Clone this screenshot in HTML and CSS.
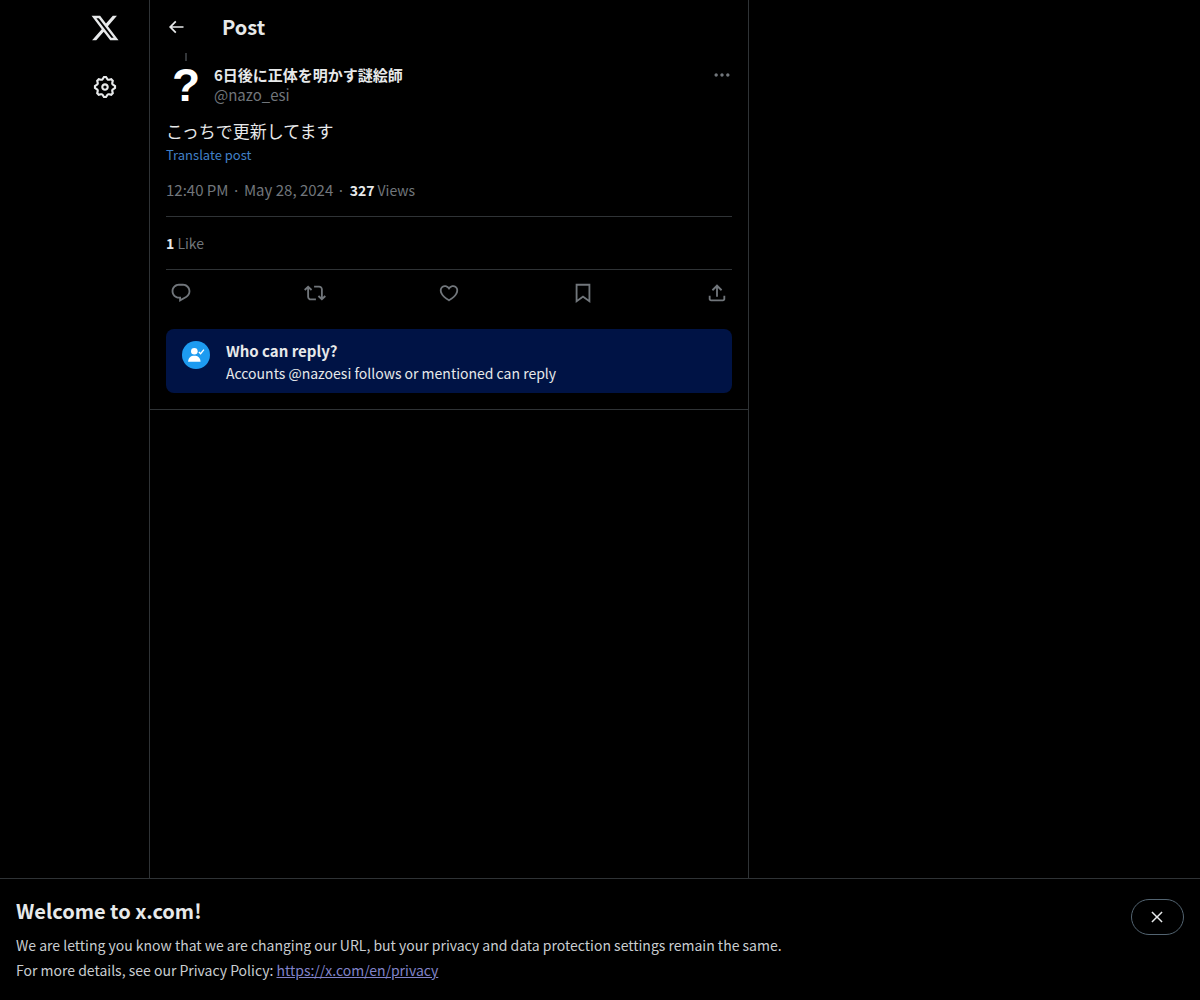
FILE: index.html
```html
<!DOCTYPE html>
<html lang="en">
<head>
<meta charset="utf-8">
<title>Post</title>
<link rel="stylesheet" href="styles.css">
</head>
<body>
<div class="page">
  <nav class="rail">
    <svg class="logo" viewBox="0 0 24 24"><path d="M18.244 2.25h3.308l-7.227 8.26 8.502 11.24H16.17l-5.214-6.817L4.99 21.75H1.68l7.73-8.835L1.254 2.25H8.08l4.713 6.231zm-1.161 17.52h1.833L7.084 4.126H5.117z"/></svg>
    <svg class="gear" viewBox="0 0 24 24"><path d="M10.54 1.75h2.92l1.57 2.36c.11.17.32.25.53.21l2.53-.59 2.17 2.17-.58 2.54c-.05.2.04.41.21.53l2.36 1.57v2.92l-2.36 1.57c-.17.12-.26.33-.21.53l.58 2.54-2.17 2.17-2.53-.59c-.21-.04-.42.04-.53.21l-1.57 2.36h-2.92l-1.58-2.36c-.11-.17-.32-.25-.52-.21l-2.54.59-2.17-2.17.58-2.54c.05-.2-.03-.41-.21-.53l-2.35-1.57v-2.92L4.1 8.97c.18-.12.26-.33.21-.53L3.73 5.9 5.9 3.73l2.54.59c.2.04.41-.04.52-.21l1.58-2.36zm1.07 2l-.98 1.47C10.05 6.08 9 6.5 7.99 6.27l-1.46-.34-.6.6.33 1.46c.24 1.01-.18 2.07-1.05 2.64l-1.46.98v.78l1.46.98c.87.57 1.29 1.63 1.05 2.64l-.33 1.46.6.6 1.46-.34c1.01-.23 2.06.19 2.64 1.05l.98 1.47h.78l.97-1.47c.58-.86 1.63-1.28 2.65-1.05l1.45.34.61-.6-.34-1.46c-.23-1.01.18-2.07 1.05-2.64l1.47-.98v-.78l-1.47-.98c-.87-.57-1.28-1.63-1.05-2.64l.34-1.46-.61-.6-1.45.34c-1.02.23-2.07-.19-2.65-1.05l-.97-1.47h-.78zM12 10.5c-.83 0-1.5.67-1.5 1.5s.67 1.5 1.5 1.5c.82 0 1.5-.67 1.5-1.5s-.68-1.5-1.5-1.5zM8.5 12c0-1.93 1.56-3.5 3.5-3.5 1.93 0 3.5 1.57 3.5 3.5s-1.57 3.5-3.5 3.5c-1.94 0-3.5-1.57-3.5-3.5z"/></svg>
  </nav>
  <main class="column">
    <header class="topbar">
      <svg class="back" viewBox="0 0 24 24"><path d="M7.414 13l5.043 5.04-1.414 1.42L3.586 12l7.457-7.46 1.414 1.42L7.414 11H21v2H7.414z"/></svg>
      <h1 class="title">Post</h1>
    </header>
    <article class="post">
      <div class="thread-line"></div>
      <div class="author">
        <div class="avatar">?</div>
        <div class="names">
          <div class="name">6日後に正体を明かす謎絵師</div>
          <div class="handle">@nazo_esi</div>
        </div>
        <svg class="more" viewBox="0 0 24 24"><path d="M3 12c0-1.1.9-2 2-2s2 .9 2 2-.9 2-2 2-2-.9-2-2zm9 2c1.1 0 2-.9 2-2s-.9-2-2-2-2 .9-2 2 .9 2 2 2zm7 0c1.1 0 2-.9 2-2s-.9-2-2-2-2 .9-2 2 .9 2 2 2z"/></svg>
      </div>
      <p class="text">こっちで更新してます</p>
      <a class="translate">Translate post</a>
      <div class="meta"><span>12:40 PM</span><span class="dot">·</span><span>May 28, 2024</span><span class="dot">·</span><span class="views"><b class="num">327</b> Views</span></div>
      <div class="likes"><b class="num">1</b> Like</div>
      <div class="actions">
        <svg class="act" viewBox="0 0 24 24"><path d="M1.751 10c0-4.42 3.584-8 8.005-8h4.366c4.49 0 8.129 3.64 8.129 8.13 0 2.96-1.607 5.68-4.196 7.11l-8.054 4.46v-3.69h-.067c-4.49.1-8.183-3.51-8.183-8.01zm8.005-6c-3.317 0-6.005 2.69-6.005 6 0 3.37 2.77 6.08 6.138 6.01l.351-.01h1.761v2.3l5.087-2.81c1.951-1.08 3.163-3.13 3.163-5.36 0-3.39-2.744-6.13-6.129-6.13H9.756z"/></svg>
        <svg class="act" viewBox="0 0 24 24"><path d="M4.5 3.88l4.432 4.14-1.364 1.46L5.5 7.55V16c0 1.1.896 2 2 2H13v2H7.5c-2.209 0-4-1.79-4-4V7.55L1.432 9.48.068 8.02 4.5 3.88zM16.5 6H11V4h5.5c2.209 0 4 1.79 4 4v8.45l2.068-1.93 1.364 1.46-4.432 4.14-4.432-4.14 1.364-1.46 2.068 1.93V8c0-1.1-.896-2-2-2z"/></svg>
        <svg class="act" viewBox="0 0 24 24"><path d="M16.697 5.5c-1.222-.06-2.679.51-3.89 2.16l-.805 1.09-.806-1.09C9.984 6.01 8.526 5.44 7.304 5.5c-1.243.07-2.349.78-2.91 1.91-.552 1.12-.633 2.78.479 4.82 1.074 1.97 3.257 4.27 7.129 6.61 3.87-2.34 6.052-4.64 7.126-6.61 1.111-2.04 1.03-3.7.477-4.82-.561-1.13-1.666-1.84-2.908-1.91zm4.187 7.69c-1.351 2.48-4.001 5.12-8.379 7.67l-.503.3-.504-.3c-4.379-2.55-7.029-5.19-8.382-7.67-1.36-2.5-1.41-4.86-.514-6.67.887-1.79 2.647-2.91 4.601-3.01 1.651-.09 3.368.56 4.798 2.01 1.429-1.45 3.146-2.1 4.796-2.01 1.954.1 3.714 1.22 4.601 3.01.896 1.81.846 4.17-.514 6.67z"/></svg>
        <svg class="act" viewBox="0 0 24 24"><path d="M4 2h16v20.94l-8-5.71-8 5.71V2zm2 2v15.06l6-4.29 6 4.29V4H6z"/></svg>
        <svg class="act" viewBox="0 0 24 24"><path d="M12 2.59l5.7 5.7-1.41 1.42L13 6.41V16h-2V6.41l-3.3 3.3-1.41-1.42L12 2.59zM21 15l-.02 3.51c0 1.38-1.12 2.49-2.5 2.49H5.5C4.11 21 3 19.88 3 18.5V15h2v3.5c0 .28.22.5.5.5h12.98c.28 0 .5-.22.5-.5L19 15h2z"/></svg>
      </div>
      <div class="notice">
        <div class="badge">
          <svg class="badge-icon" viewBox="0 0 24 24"><circle cx="10" cy="7.5" r="4"/><path d="M2.5 20c.4-4.6 3.2-7 7.5-7s7.1 2.4 7.5 7z"/><path class="check" d="M15.5 8.5l2 2 4-5"/></svg>
        </div>
        <div class="notice-body">
          <div class="notice-title">Who can reply?</div>
          <div class="notice-text">Accounts @nazoesi follows or mentioned can reply</div>
        </div>
      </div>
    </article>
  </main>
</div>
<aside class="banner">
  <div class="banner-body">
    <h2 class="banner-title">Welcome to x.com!</h2>
    <p class="banner-line">We are letting you know that we are changing our URL, but your privacy and data protection settings remain the same.</p>
    <p class="banner-line">For more details, see our Privacy Policy: <a class="banner-link">https://x.com/en/privacy</a></p>
  </div>
  <div class="close">
    <svg class="close-icon" viewBox="0 0 24 24"><path d="M10.59 12L4.54 5.96l1.42-1.42L12 10.59l6.04-6.05 1.42 1.42L13.41 12l6.05 6.04-1.42 1.42L12 13.41l-6.04 6.05-1.42-1.42L10.59 12z"/></svg>
  </div>
</aside>
</body>
</html>
```
FILE: styles.css
```css
* { box-sizing: border-box; }
html, body { margin: 0; height: 100%; background: #000; overflow: hidden; }
body { font-family: "Noto Sans CJK JP", "Noto Sans", sans-serif; color: #e7e9ea; }
svg { display: block; fill: currentColor; }

.page { display: flex; height: 1000px; }

.rail { width: 149px; flex: none; display: flex; flex-direction: column; align-items: flex-end; padding: 12px 29px 0 0; }
.logo { width: 30px; height: 30px; color: #e7e9ea; margin-top: 1px; }
.gear { width: 26px; height: 26px; color: #e7e9ea; margin: 31px 2px 0 0; }

.column { width: 600px; flex: none; border-left: 1px solid #2f3336; border-right: 1px solid #2f3336; }

.topbar { height: 53px; display: flex; align-items: center; padding: 0 16px; }
.back { width: 20px; height: 20px; color: #e7e9ea; margin: 1px 1px 0 0; }
.title { margin: 0 0 0 35px; font-size: 20px; line-height: 24px; font-weight: 700; color: #e7e9ea; }

.post { padding: 0 16px 16px; border-bottom: 1px solid #2f3336; }
.thread-line { width: 2px; height: 8px; margin-left: 19px; background: #333639; }

.author { display: flex; align-items: flex-start; margin-top: 2px; }
.avatar { width: 40px; height: 44px; margin-right: 8px; font: 700 46px/44px "Liberation Sans", sans-serif; color: #fff; text-align: center; }
.names { flex: 1; min-width: 0; padding-top: 1px; }
.name { font-size: 15px; line-height: 21px; font-weight: 700; color: #e7e9ea; }
.handle { font-size: 15px; line-height: 20px; color: #71767b; }
.more { width: 20px; height: 20px; margin-top: 2px; color: #71767b; }

.text { margin: 12px 0 0; font-size: 17px; line-height: 24px; color: #e7e9ea; }
.translate { display: block; margin-top: 2px; font-size: 13px; line-height: 20px; color: #4080c8; }

.meta { display: flex; gap: 3.5px; margin-top: 15px; padding-bottom: 16px; font-size: 15px; line-height: 20px; color: #71767b; border-bottom: 1px solid #2f3336; }
.views { font-size: 14px; margin-left: 1px; }
.num { font-weight: 700; color: #e7e9ea; }

.likes { padding: 16px 0; font-size: 14px; line-height: 20px; color: #71767b; border-bottom: 1px solid #2f3336; }

.actions { display: flex; justify-content: space-between; align-items: center; height: 59px; padding: 0 4px 13px; color: #71767b; }
.act { width: 22px; height: 22px; }

.notice { display: flex; gap: 16px; height: 64px; padding: 12px 16px; border-radius: 8px; background: #001345; }
.badge { width: 28px; height: 28px; flex: none; border-radius: 50%; background: #1d9bf0; display: flex; align-items: center; justify-content: center; }
.badge-icon { width: 20px; height: 20px; color: #fff; }
.check { fill: none; stroke: #fff; stroke-width: 1.6; }
.notice-body { margin-top: -2px; }
.notice-title { font-size: 15px; line-height: 24px; font-weight: 700; color: #e7e9ea; }
.notice-text { font-size: 14px; line-height: 20px; color: #e7e9ea; }

.banner { position: fixed; left: 0; right: 0; bottom: 0; height: 122px; display: flex; justify-content: space-between; padding: 20px 16px 0; background: #000; border-top: 1px solid #2f3336; }
.banner-title { margin: 0 0 10px; font-size: 20px; line-height: 24px; font-weight: 700; color: #e7e9ea; }
.banner-line { margin: 0; font-size: 14px; line-height: 25px; color: #c9cdd0; }
.banner-link { color: #8183c9; text-decoration: underline; }
.close { width: 53px; height: 36px; border: 1px solid #536471; border-radius: 18px; display: flex; align-items: center; justify-content: center; color: #e7e9ea; }
.close-icon { width: 18px; height: 18px; margin-right: 1px; }
```
